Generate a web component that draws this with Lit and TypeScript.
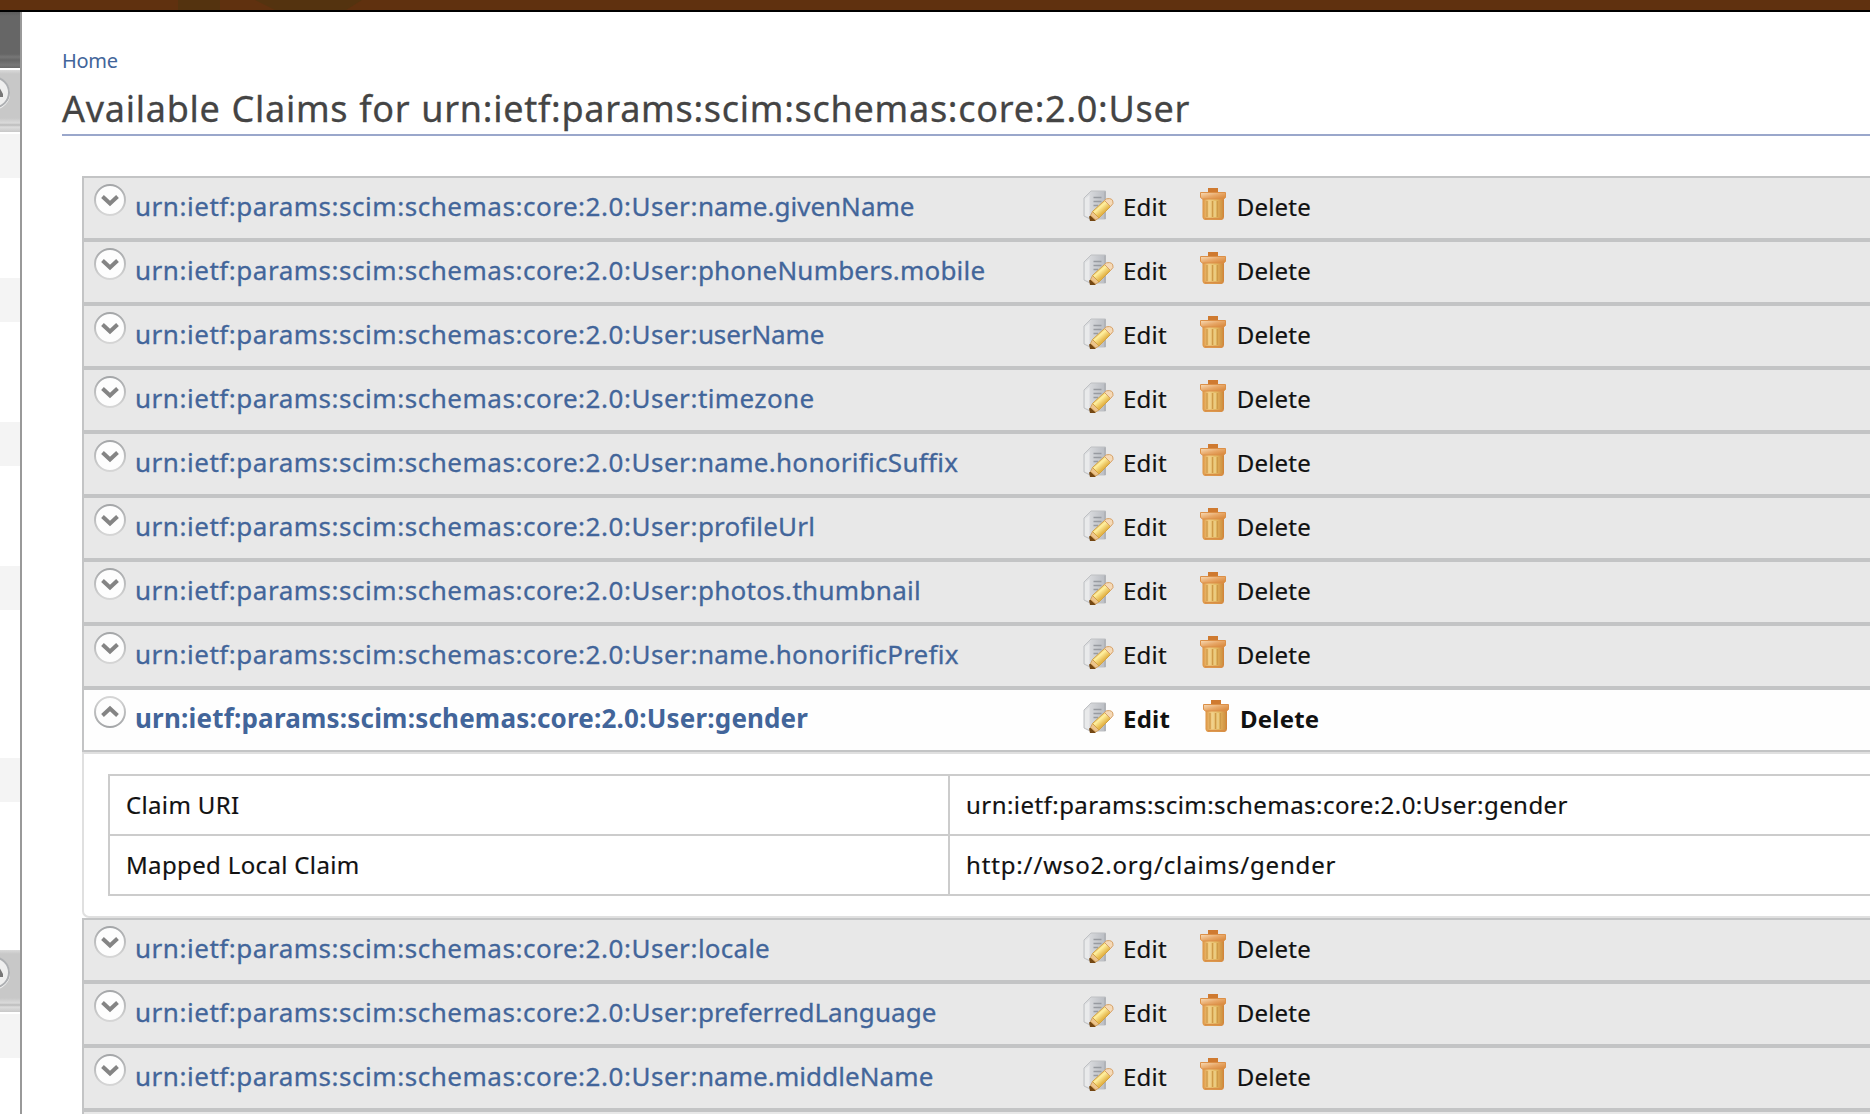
import { LitElement, html, css, svg } from "lit";
import { customElement, property } from "lit/decorators.js";
import { styleMap } from "lit/directives/style-map.js";

const BASE = "urn:ietf:params:scim:schemas:core:2.0:User";

interface Claim { name: string; tracking: number; open?: boolean; local?: string; }

const CLAIMS: Claim[] = [
  { name: "name.givenName", tracking: 0 },
  { name: "phoneNumbers.mobile", tracking: 0.2 },
  { name: "userName", tracking: -0.1 },
  { name: "timezone", tracking: 0.4 },
  { name: "name.honorificSuffix", tracking: 0.3 },
  { name: "profileUrl", tracking: 0.17 },
  { name: "photos.thumbnail", tracking: 0.31 },
  { name: "name.honorificPrefix", tracking: 0.25 },
  { name: "gender", tracking: 0.1, open: true, local: "http://wso2.org/claims/gender" },
  { name: "locale", tracking: 0.2 },
  { name: "preferredLanguage", tracking: 0.05 },
  { name: "name.middleName", tracking: 0.08 },
];

const toggleIcon = (open: boolean) => html`<svg class="toggle" viewBox="0 0 32 32" width="32" height="32">
  <defs><linearGradient id="ring" x1="0" y1=${open ? "1" : "0"} x2="0" y2=${open ? "0" : "1"}>
    <stop offset="0" stop-color="#a4a6a8"/><stop offset="1" stop-color="#d6d6d6"/></linearGradient></defs>
  <circle cx="16" cy="16" r="15" fill="#fdfdfd" stroke="url(#ring)" stroke-width="2"/>
  ${open
    ? svg`<path d="M8.500 19.500 16 12.500 23.500 19.500" fill="none" stroke="#848484" stroke-width="4"/>`
    : svg`<path d="M8.500 12.500 16 19.500 23.500 12.500" fill="none" stroke="#848484" stroke-width="4"/>`}
</svg>`;

const editIcon = html`<svg class="edit-icon" viewBox="0 0 32 32" width="32" height="32">
  <defs>
    <linearGradient id="paper" x1="0" y1="0" x2="1" y2="0"><stop offset="0" stop-color="#e2e3e5"/><stop offset="1" stop-color="#b9bcc2"/></linearGradient>
    <linearGradient id="pencil" gradientUnits="userSpaceOnUse" x1="14" y1="16.500" x2="20" y2="23.500"><stop offset="0" stop-color="#e8c060"/><stop offset=".35" stop-color="#fff0a0"/><stop offset="1" stop-color="#e4b548"/></linearGradient>
  </defs>
  <path d="M1 9 8 2H22.500V30H7L1 27Z" fill="url(#paper)" stroke="#bfc1c4" stroke-width="1"/>
  <path d="M2 10 6.500 6V28.500L2 26.500Z" fill="#e9eaeb"/>
  <path d="M22 2.500V30" stroke="#a9acb1" stroke-width="1.200"/>
  <path d="M10.500 8.500H18.500M10.500 12.500H18.500M10.500 16.500H15" stroke="#989ba1" stroke-width="1.600"/>
  <path d="M6 27.500 9 26 13.500 30.500 12 32H7Z" fill="#744713"/>
  <path d="M7.500 26.500 9.500 22.500 16 29 12.500 31Z" fill="#ecc48c" stroke="#cf9a50" stroke-width=".8"/>
  <path d="M9.500 22.500 21.500 11.500 27.500 17.500 16 29Z" fill="url(#pencil)" stroke="#d2a244" stroke-width="1"/>
  <path d="M21.500 11.500 23.500 9.800Q30.500 8.500 30 14.500L27.500 17.500Z" fill="#f5dab8" stroke="#d6a065" stroke-width="1"/>
</svg>`;

const trashIcon = html`<svg class="trash-icon" viewBox="0 0 26 32" width="26" height="32">
  <defs>
    <linearGradient id="can" x1="0" y1="0" x2="1" y2="0"><stop offset="0" stop-color="#dc9240"/><stop offset=".3" stop-color="#f2cf86"/><stop offset=".65" stop-color="#e2b961"/><stop offset="1" stop-color="#d08238"/></linearGradient>
    <linearGradient id="lid" x1="0" y1="0" x2="1" y2="1"><stop offset="0" stop-color="#f8dcb8"/><stop offset=".5" stop-color="#e8a868"/><stop offset="1" stop-color="#d58234"/></linearGradient>
  </defs>
  <path d="M8 0H18V5H8Z" fill="#cf7a30"/>
  <path d="M2.500 10H24V28.500Q24 32 20.500 32H6Q2.500 32 2.500 28.500Z" fill="url(#can)"/>
  <path d="M4.500 30.800H22" stroke="#d98e45" stroke-width="2"/>
  <path d="M7 13V29M12.500 13V29M17.500 13V29M21.500 13V29" stroke="#cf9a48" stroke-width="1.300"/>
  <path d="M9.800 13V29M15 13V29" stroke="#efd28e" stroke-width="1.300"/>
  <path d="M.5 4.500H25.500V9.500L23.500 11H2.500L.5 9.500Z" fill="url(#lid)" stroke="#dc9048" stroke-width="1"/>
</svg>`;

@customElement("claim-row")
class ClaimRow extends LitElement {
  @property({ attribute: false }) claim!: Claim;
  static styles = css`
    :host { display: block; }
    .bar { box-sizing: border-box; height: 64px; border: 2px solid #c3c4c5; border-right: 0; background: #e8e8e8;
      display: grid; grid-template-columns: 32px 957px auto auto; justify-content: start; padding-left: 10px; align-items: start; white-space: nowrap; }
    .bar.open { background: #fefefe; font-weight: 700; }
    svg { display: block; }
    .toggle { margin-top: 6px; }
    .name { color: #42659a; font-size: 26px; line-height: 40px; padding: 8px 0 0 9px; letter-spacing: 0.53px; -webkit-text-stroke: 0.3px #42659a; }
    .open .name { letter-spacing: 0.2px; -webkit-text-stroke: 0; }
    .action { display: flex; color: #111; font-size: 24px; line-height: 40px; padding-top: 9px; letter-spacing: 0.2px; -webkit-text-stroke: 0.2px #111; }
    .open .action { -webkit-text-stroke: 0; }
    .action.delete { margin-left: 33px; }
    .action svg { margin-top: 2px; }
    .action .trash-icon { margin-top: 1px; }
    .edit-icon { margin-right: 8px; }
    .trash-icon { margin-right: 11px; }
    .panel { box-sizing: border-box; height: 166px; border: 2px solid #e0e0e0; border-right: 0; border-radius: 0 0 0 7px; padding: 20px 0 0 24px; background: #fff; }
    .grid { display: grid; grid-template-columns: 840px 1fr; border: 2px solid #ccc; border-width: 2px 0 0 2px; }
    .cell { box-sizing: border-box; height: 60px; border-bottom: 2px solid #ccc; padding-left: 16px; font-size: 24px; line-height: 57px; color: #111; white-space: nowrap; -webkit-text-stroke: 0.2px #111; }
    .key { border-right: 2px solid #ccc; letter-spacing: 0.35px; }
    .uri { letter-spacing: 0.45px; }
    .local { letter-spacing: 0.85px; }
  `;
  render() {
    const c = this.claim;
    return html`<div class="bar ${c.open ? "open" : ""}">
        ${toggleIcon(!!c.open)}
        <span class="name">${BASE}:<span style=${styleMap({ letterSpacing: `${c.tracking}px` })}>${c.name}</span></span>
        <span class="action edit">${editIcon}<span>Edit</span></span>
        <span class="action delete">${trashIcon}<span>Delete</span></span>
      </div>
      ${c.open ? html`<div class="panel"><div class="grid">
        <div class="cell key">Claim URI</div><div class="cell uri">${BASE}:${c.name}</div>
        <div class="cell key">Mapped Local Claim</div><div class="cell local">${c.local}</div>
      </div></div>` : ""}`;
  }
}

@customElement("app-root")
class AppRoot extends LitElement {
  static styles = css`
    :host { display: flex; flex-direction: column; width: 1870px; height: 1114px; overflow: hidden; background: #fff;
      font-family: "Noto Sans", "Open Sans", sans-serif; }
    .top { box-sizing: border-box; flex: none; height: 12px; background: #60310f; border-bottom: 2px solid #000; }
    .top svg { display: block; }
    .body { display: flex; flex: 1; min-height: 0; }
    .side { flex: none; width: 20px; border-right: 2px solid #999; overflow: hidden; }
    .dark { height: 56px; background: linear-gradient(#5c5c5c 0, #666 4px, #666 42px, #777 45px, #666 48px, #777 53px, #6a6a6a 56px); }
    .head { height: 62px; margin: 2px 0; background: linear-gradient(#dadada 0, #c8c8c8 4px, #c8c8c8 48px, #dadada 53px, #bbb 55px, #ddd 57px, #c8c8c8 62px); }
    .head svg { display: block; padding-top: 6px; }
    .stripe { height: 44px; background: #f4f4f4; }
    .gap { height: 100px; }
    .gap.tall { height: 148px; }
    .gap.last { height: 146px; }
    .main { flex: 1; min-width: 0; padding-left: 40px; }
    .crumb { color: #42659a; font-size: 20px; line-height: 28px; padding-top: 35px; letter-spacing: -0.3px; }
    h1 { margin: 0; box-sizing: border-box; height: 61px; border-bottom: 2px solid #9aa7cb; font-weight: 400; font-size: 36px; line-height: 50px; padding-top: 9px;
      color: #444; letter-spacing: 0.73px; word-spacing: 0.8px; white-space: nowrap; -webkit-text-stroke: 0.3px #444; }
    .rows { padding: 40px 0 0 20px; }
    .next { height: 4px; box-sizing: border-box; border: solid #c3c4c5; border-width: 2px 0 0 2px; background: #e8e8e8; }
  `;
  render() {
    const knob = html`<svg width="20" height="40" viewBox="0 0 20 40">
      <circle cx="-6" cy="17.500" r="16" fill="#f6f6f6"/>
      <circle cx="-6" cy="16.500" r="15" fill="#efefef" stroke="#aeb0b3" stroke-width="2"/>
      <path d="M0 12.500 3 18V21H0Z" fill="#777"/></svg>`;
    const stripe = html`<div class="stripe"></div>`;
    const gap = html`<div class="gap"></div>`;
    return html`
      <div class="top"><svg width="1870" height="10"><path d="M178 0H220V10H178ZM255 0H362L346 10H275Z" fill="#54330f"/></svg></div>
      <div class="body">
        <div class="side">
          <div class="dark"></div>
          <div class="head">${knob}</div>
          ${stripe}${gap}${stripe}${gap}${stripe}${gap}${stripe}
          <div class="gap tall"></div>${stripe}<div class="gap last"></div>
          <div class="head">${knob}</div>
          ${stripe}
        </div>
        <div class="main">
          <div class="crumb">Home</div>
          <h1>Available Claims for ${BASE}</h1>
          <div class="rows">${CLAIMS.map((c) => html`<claim-row .claim=${c}></claim-row>`)}<div class="next"></div></div>
        </div>
      </div>`;
  }
}
